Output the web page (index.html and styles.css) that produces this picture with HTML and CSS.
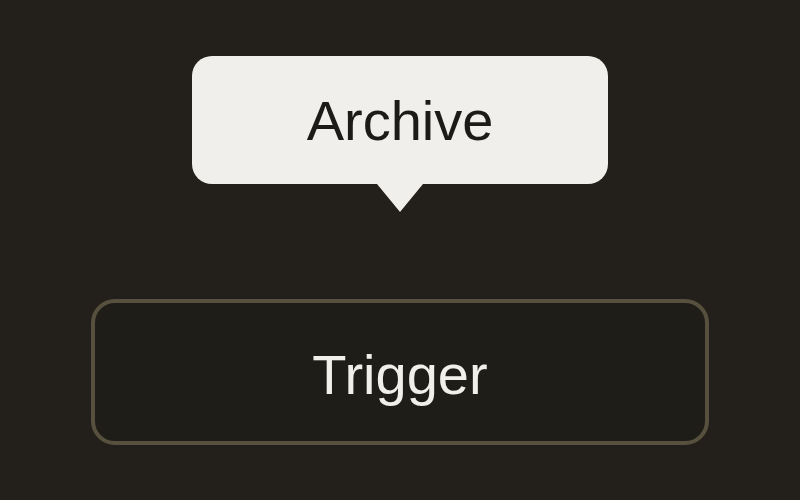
FILE: index.html
```html
<!DOCTYPE html>
<html lang="en">
<head>
  <meta charset="UTF-8">
  <meta name="viewport" content="width=device-width, initial-scale=1.0">
  <title>Tooltip</title>
  <link rel="stylesheet" href="styles.css">
</head>
<body>
  <div class="stage">
    <div class="tooltip" role="tooltip">Archive</div>
    <button class="trigger">Trigger</button>
  </div>
</body>
</html>
```

FILE: styles.css
```css
body {
  margin: 0;
  background-color: #23201b;
  font-family: "Liberation Sans", Arial, sans-serif;
}

.stage {
  height: 500px;
  display: flex;
  flex-direction: column;
  align-items: center;
  padding-top: 56px;
  box-sizing: border-box;
}

.tooltip {
  position: relative;
  width: 416px;
  height: 128px;
  border-radius: 20px;
  background-color: #f0efeb;
  color: #1c1b17;
  font-size: 56px;
  display: flex;
  align-items: center;
  justify-content: center;
}

.tooltip::after {
  content: "";
  position: absolute;
  top: 100%;
  left: 50%;
  margin-left: -23px;
  border-left: 23px solid transparent;
  border-right: 23px solid transparent;
  border-top: 28px solid #f0efeb;
}

.trigger {
  margin-top: 115px;
  width: 618px;
  height: 146px;
  border: 4px solid #57503f;
  border-radius: 24px;
  background-color: #1f1d17;
  color: #f0efeb;
  font-family: inherit;
  font-size: 56px;
  padding: 4px 0 0;
}
```
